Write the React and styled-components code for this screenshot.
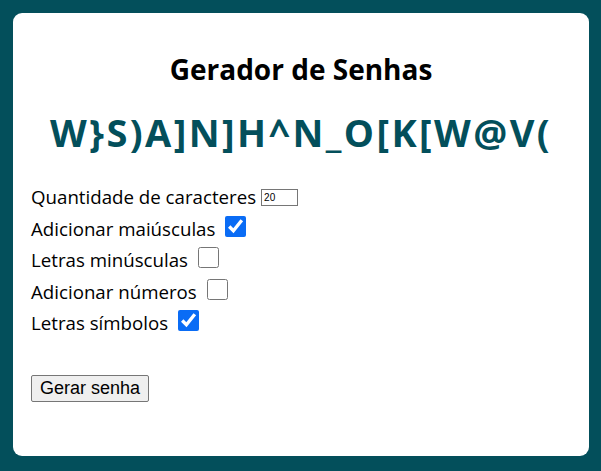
import React, { useState } from "react";
import styled, { createGlobalStyle } from "styled-components";

const Global = createGlobalStyle`
  html, body { margin: 0; padding: 0; }
  body {
    background: #034f5b;
    font-family: "Open Sans", "Noto Sans", sans-serif;
  }
`;

const Page = styled.div`
  padding: 13px 12px 15px 13px;
`;

const Card = styled.main`
  box-sizing: border-box;
  min-height: 443px;
  background: #ffffff;
  border-radius: 9px;
  padding: 37px 18px 0 18px;
  display: flex;
  flex-direction: column;
`;

const Title = styled.h1`
  margin: 0;
  font-size: 28px;
  font-weight: 700;
  line-height: normal;
  color: #000;
  text-align: center;
`;

const Password = styled.h2`
  margin: 17.5px 0 0 0;
  font-size: 38px;
  font-weight: 700;
  line-height: normal;
  letter-spacing: 2.4px;
  color: #034f5b;
  text-align: center;
  white-space: nowrap;
`;

const Options = styled.div`
  margin-top: 23.7px;
  display: flex;
  flex-direction: column;
`;

const Row = styled.label`
  display: flex;
  align-items: center;
  gap: 5px;
  height: 31.5px;
  font-size: 18.7px;
  color: #000;
`;

const Check = styled.input.attrs({ type: "checkbox" })`
  width: 21px;
  height: 21px;
  margin: 0 0 4.5px 5px;
  accent-color: #0a6cf5;
`;

const Amount = styled.input.attrs({ type: "number" })`
  box-sizing: border-box;
  width: 37px;
  height: 17px;
  margin: 1.5px 0 0 0;
  padding: 1px 2px;
  border: 1px solid #767676;
  font-family: "Liberation Sans", Arial, sans-serif;
  font-size: 10px;
  -moz-appearance: textfield;
  &::-webkit-inner-spin-button,
  &::-webkit-outer-spin-button {
    -webkit-appearance: none;
    margin: 0;
  }
`;

const Actions = styled.div`
  margin-top: 36.5px;
`;

const Button = styled.button`
  font-family: "Liberation Sans", Arial, sans-serif;
  font-size: 18px;
  line-height: 21px;
  color: #000;
  background: #efefef;
  border: 1px solid #767676;
  border-radius: 2px;
  padding: 2px 8px;
`;

export default function App() {
  const [opts, setOpts] = useState({ upper: true, lower: false, nums: false, syms: true });
  const toggle = (k) => setOpts((o) => ({ ...o, [k]: !o[k] }));
  return (
    <Page>
      <Global />
      <Card>
        <Title>Gerador de Senhas</Title>
        <Password>W}S)A]N]H^N_O[K[W@V(</Password>
        <Options>
          <Row>
            Quantidade de caracteres
            <Amount defaultValue={20} />
          </Row>
          <Row>
            Adicionar maiúsculas
            <Check checked={opts.upper} onChange={() => toggle("upper")} />
          </Row>
          <Row>
            Letras minúsculas
            <Check checked={opts.lower} onChange={() => toggle("lower")} />
          </Row>
          <Row>
            Adicionar números
            <Check checked={opts.nums} onChange={() => toggle("nums")} />
          </Row>
          <Row>
            Letras símbolos
            <Check checked={opts.syms} onChange={() => toggle("syms")} />
          </Row>
        </Options>
        <Actions>
          <Button>Gerar senha</Button>
        </Actions>
      </Card>
    </Page>
  );
}
